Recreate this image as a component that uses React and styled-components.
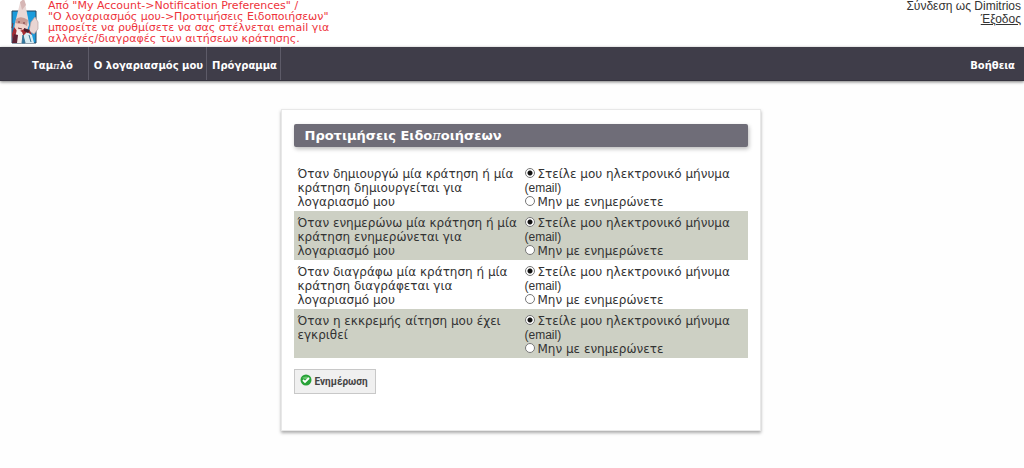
import React from 'react';
import styled, { createGlobalStyle } from 'styled-components';

const GlobalStyle = createGlobalStyle`
  body {
    margin: 0;
    background: #fefefe;
    color: #333;
    font-family: "DejaVu Sans", sans-serif;
    font-size: 12px;
  }
`;

const Header = styled.header`
  display: flex;
  align-items: flex-start;
  height: 47px;
  overflow: hidden;
  background: #fff;
`;

const Logo = styled.svg`
  flex: none;
  width: 48px;
  height: 47px;
`;

const Notice = styled.p`
  margin: 0;
  color: #ee333b;
  font-size: 11px;
  line-height: 11px;
  white-space: nowrap;
`;

const Session = styled.div`
  margin-left: auto;
  padding-right: 3px;
  font-family: "Liberation Sans", sans-serif;
  font-size: 12px;
  line-height: 13px;
  text-align: right;

  a {
    color: #333;
  }
`;

const Nav = styled.nav`
  display: flex;
  height: 34px;
  padding-left: 27px;
  background: #3f3d49;
  border-bottom: 1px solid #35333e;
  box-shadow: 0 1px 3px #777;
  box-sizing: border-box;
`;

const NavLink = styled.a`
  display: flex;
  align-items: center;
  padding: 4px 3px 0 5px;
  border-right: 1px solid #5d5b68;
  color: #fff;
  font-size: 10px;
  font-weight: bold;
  text-decoration: none;
  white-space: pre;

  &:first-child {
    padding-right: 15px;
  }

  &:last-child {
    margin-left: auto;
    padding-right: 9px;
    border-right: none;
  }
`;

const Main = styled.main`
  padding: 28px 0 36px 17px;
`;

const Panel = styled.form`
  max-width: 480px;
  margin: 0 auto;
  padding: 14px 12px 36px;
  background: #fff;
  border: 1px solid #e8e8e8;
  box-shadow: 0 2px 3px #aaa;
  box-sizing: border-box;
`;

const Title = styled.h1`
  margin: 0 0 15px;
  padding: 0 11px;
  border-radius: 2px;
  background: #6f6d78;
  box-shadow: 1px 2px 4px #bbb;
  color: #fff;
  font-size: 13px;
  line-height: 23px;
`;

const Pi = styled.span`
  font-family: "DejaVu Serif", serif;
  font-style: italic;
  font-weight: normal;
`;

const Table = styled.table`
  width: 100%;
  table-layout: fixed;
  border-collapse: collapse;
  font-size: 12px;
  line-height: 14px;
`;

const Row = styled.tr`
  background: ${props => (props.$alt ? '#cdd0c4' : 'transparent')};

  th,
  td {
    padding: 5px 0 2px 4px;
    font-weight: normal;
    text-align: left;
    vertical-align: top;
  }
`;

const Option = styled.label`
  display: block;
`;

const Latin = styled.span`
  display: block;
  font-family: "Liberation Sans", sans-serif;
`;

const Radio = styled.input`
  appearance: none;
  width: 10px;
  height: 10px;
  margin: 0 3px 0 0;
  border: 1px solid #777;
  border-radius: 50%;
  background: #fff;
  box-sizing: border-box;

  &:checked {
    background: radial-gradient(circle, #111 0 2px, #fff 3px);
  }
`;

const SubmitButton = styled.button`
  display: flex;
  align-items: center;
  gap: 3px;
  height: 25px;
  margin-top: 11px;
  padding: 0 7px 0 5px;
  border: 1px solid #c8c8c8;
  background: #f0f0f0;
  color: #444;
  font-family: Roboto, sans-serif;
  font-size: 10px;
  font-weight: bold;

  svg {
    width: 12px;
    height: 12px;
    margin-bottom: 3px;
  }
`;

const preferences = [
  { id: 'created', text: 'Όταν δημιουργώ μία κράτηση ή μία κράτηση δημιουργείται για λογαριασμό μου' },
  { id: 'updated', text: 'Όταν ενημερώνω μία κράτηση ή μία κράτηση ενημερώνεται για λογαριασμό μου' },
  { id: 'deleted', text: 'Όταν διαγράφω μία κράτηση ή μία κράτηση διαγράφεται για λογαριασμό μου' },
  { id: 'approved', text: 'Όταν η εκκρεμής αίτηση μου έχει εγκριθεί' },
];

const WizardLogo = () => (
  <Logo viewBox="0 0 48 47" aria-hidden="true">
    <path d="M12 11h24v32H12z" fill="#1b9bdb" stroke="#26455f" />
    <path d="M16 19 20 3l3-4 2 4 3 15 1 7-3 8-10-2-1-7z" fill="#ead8d6" />
    <path d="m20 2 2 8 4-5-2-6z" fill="#d6b6b5" />
    <path d="M16 19q5-4 12 1l-1 6q-6-4-12-1z" fill="#c99d96" />
    <path d="m15 23 5 1 6 2-2 7-6 1-4-4z" fill="#f3d4cc" />
    <path d="m31 22 4-5 3 5v7l-4 5-5-3z" fill="#e9d5d3" stroke="#b9a1a2" strokeWidth=".7" />
    <path d="m14 27 4 5 6-3 6 2 2 4-3 8H13l-1-9z" fill="#a42c32" />
    <path d="m17 29 5 3 4 11h-9l-2-5z" fill="#f5eeec" />
    <path d="m27 32 5 3 2 8h-8l-4-6z" fill="#d9ecf2" />
    <path d="m14 34 4 1-1 8h-5z" fill="#602233" />
    <path d="m24 28 6 2-2 3-4-2z" fill="#4b1e2c" />
    <path d="m23 35 2 8h-3zM29 35l2 7" fill="#2d78a5" stroke="#367595" />
    <path d="M18 22h2m3 1h2M18 28l4 1M13 23l-1 5" stroke="#78363a" fill="none" />
  </Logo>
);

const App = () => (
  <>
    <GlobalStyle />
    <Header>
      <WizardLogo />
      <Notice>
        Από "My Account-&gt;Notification Preferences" /<br />
        "Ο λογαριασμός μου-&gt;Προτιμήσεις Ειδοποιήσεων"<br />
        μπορείτε να ρυθμίσετε να σας στέλνεται email για<br />
        αλλαγές/διαγραφές των αιτήσεων κράτησης.
      </Notice>
      <Session>
        Σύνδεση ως Dimitrios
        <br />
        <a href="#logout">Έξοδος</a>
      </Session>
    </Header>
    <Nav>
      <NavLink href="#dashboard">Ταμ<Pi>π</Pi>λό</NavLink>
      <NavLink href="#account">Ο λογαριασμός μου</NavLink>
      <NavLink href="#schedule">Πρόγραμμα</NavLink>
      <NavLink href="#help">Βοήθεια</NavLink>
    </Nav>
    <Main>
      <Panel onSubmit={e => e.preventDefault()}>
        <Title>Προτιμήσεις Ειδο<Pi>π</Pi>οιήσεων</Title>
        <Table>
          <tbody>
            {preferences.map(({ id, text }, i) => (
              <Row key={id} $alt={i % 2 === 1}>
                <th scope="row" id={id}>{text}</th>
                <td>
                  <Option>
                    <Radio type="radio" name={id} value="1" defaultChecked />
                    Στείλε μου ηλεκτρονικό μήνυμα
                    <Latin>(email)</Latin>
                  </Option>
                  <Option>
                    <Radio type="radio" name={id} value="0" />
                    Μην με ενημερώνετε
                  </Option>
                </td>
              </Row>
            ))}
          </tbody>
        </Table>
        <SubmitButton type="submit">
          <svg viewBox="0 0 12 12" aria-hidden="true">
            <circle cx="6" cy="6" r="5.5" fill="#27a237" />
            <path d="M2 4a5 4 0 0 1 8 0 8 8 0 0 1-8 0" fill="#69c66f" />
            <path d="m3 6 2 2 4-4" fill="none" stroke="#fff" strokeWidth="1.8" />
          </svg>
          Ενημέρωση
        </SubmitButton>
      </Panel>
    </Main>
  </>
);

export default App;
